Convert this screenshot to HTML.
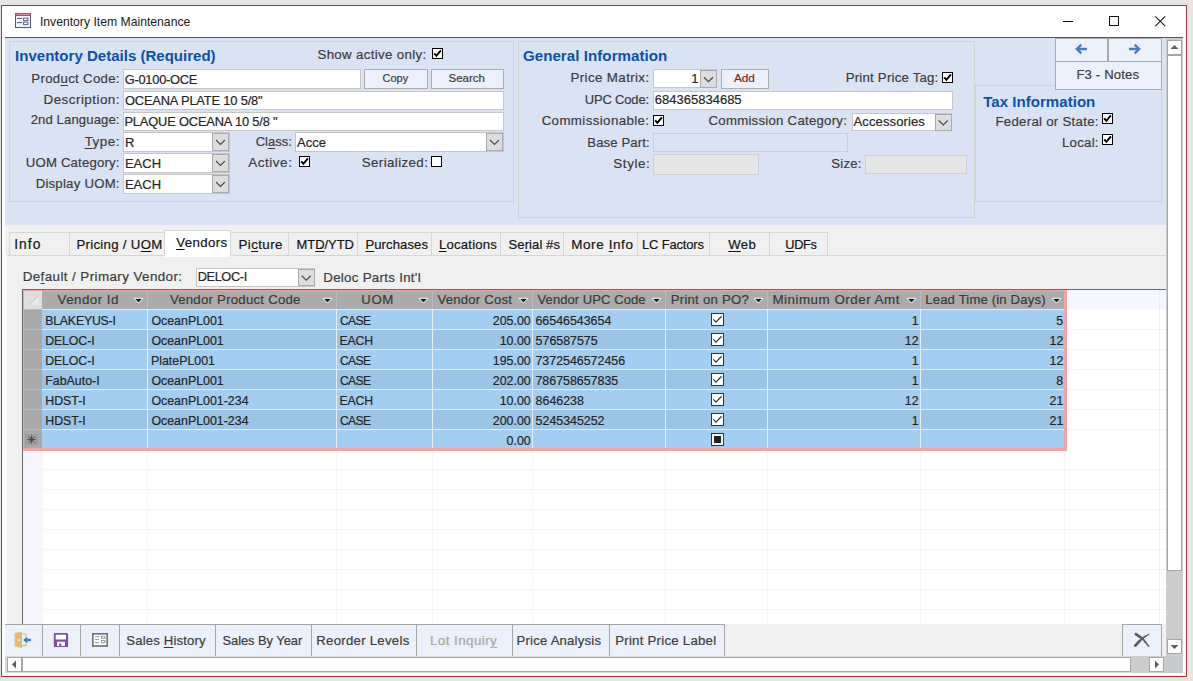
<!DOCTYPE html>
<html><head><meta charset="utf-8"><style>
html,body{margin:0;padding:0;}
body{width:1193px;height:681px;position:relative;overflow:hidden;background:#E6E6E6;font-family:"Liberation Sans", sans-serif;}
.a{position:absolute;}
.t{white-space:nowrap;line-height:20px;-webkit-text-stroke:0.2px currentColor;}
u{text-decoration:underline;text-underline-offset:2px;}
</style></head><body>
<div class="a" style="left:1px;top:5px;width:1186px;height:672px;background:#FFFFFF;box-shadow:inset 0 0 0 1px #A8343A;"></div>
<svg class="a" style="left:15px;top:13px" width="16" height="15" viewBox="0 0 16 15"><rect x="0.5" y="0.5" width="15" height="14" fill="#F2F5FB" stroke="#4D5B78"/><rect x="0" y="0" width="16" height="3" fill="#C9416A"/><rect x="1.5" y="1.2" width="13" height="0.8" fill="#E7A0B8"/><rect x="2" y="4.9" width="5" height="1.1" fill="#5A6E9A"/><rect x="2" y="9" width="5" height="1.1" fill="#5A6E9A"/><rect x="8.6" y="5.1" width="4.3" height="2.5" fill="none" stroke="#4D5B78" stroke-width="0.9"/><rect x="8.6" y="9.1" width="4.3" height="2.5" fill="none" stroke="#4D5B78" stroke-width="0.9"/></svg>
<div class="a t" style="left:39.90px;top:12px;font-size:12.2px;letter-spacing:-0.000px;color:#1A1A1A;font-weight:normal;-webkit-text-stroke:0;">Inventory Item Maintenance</div>
<div class="a" style="left:1063px;top:21px;width:10px;height:1px;background:#111;"></div>
<div class="a" style="left:1109px;top:16px;width:10px;height:10px;box-shadow:inset 0 0 0 1px #111;"></div>
<svg class="a" style="left:1154px;top:15px" width="13" height="13"><path d="M1.3 1.3 L11.2 11.2 M11.2 1.3 L1.3 11.2" stroke="#1A1A1A" stroke-width="1.05"/></svg>
<div class="a" style="left:5px;top:37px;width:1178px;height:1px;background:#A8343A;"></div>
<div class="a" style="left:5px;top:38px;width:1161px;height:187px;background:#DAE3F3;"></div>
<div class="a" style="left:9px;top:41px;width:505px;height:161px;box-shadow:inset 0 0 0 1px #D2D3D0;"></div>
<div class="a" style="left:518px;top:41px;width:457px;height:177px;box-shadow:inset 0 0 0 1px #D2D3D0;"></div>
<div class="a" style="left:975px;top:85px;width:187px;height:117px;box-shadow:inset 0 0 0 1px #D2D3D0;"></div>
<div class="a t" style="left:15.10px;top:46px;font-size:15.02px;letter-spacing:0.009px;color:#0F4FAA;font-weight:bold;-webkit-text-stroke:0;">Inventory Details (Required)</div>
<div class="a t" style="left:317.47px;top:45px;font-size:13.29px;letter-spacing:0.330px;color:#3C3C3C;font-weight:normal;">Show active only:</div>
<div class="a" style="left:432px;top:48px;width:11px;height:11px;background:#fff;box-shadow:inset 0 0 0 1px #000;"></div>
<svg class="a" style="left:432px;top:48px" width="11" height="11" viewBox="0 0 11 11"><path d="M2.2 5.3 L4.4 7.8 L8.9 2.4" stroke="#000" stroke-width="2" fill="none"/></svg>
<div class="a t" style="left:31.34px;top:69px;font-size:13.24px;letter-spacing:0.299px;color:#3C3C3C;font-weight:normal;">Prod<u>u</u>ct Code:</div>
<div class="a" style="left:123px;top:69px;width:238px;height:20px;background:#fff;box-shadow:inset 0 0 0 1px #C6C6C6;"></div>
<div class="a t" style="left:124.66px;top:70px;font-size:12.84px;letter-spacing:-0.234px;color:#262626;font-weight:normal;">G-0100-OCE</div>
<div class="a" style="left:364px;top:69px;width:64px;height:20px;background:#EBF0FA;box-shadow:inset 0 0 0 1px #ADADAD;"></div>
<div class="a" style="left:431px;top:69px;width:73px;height:20px;background:#EBF0FA;box-shadow:inset 0 0 0 1px #ADADAD;"></div>
<div class="a t" style="left:382.45px;top:68px;font-size:11.03px;letter-spacing:0.001px;color:#3C3C3C;font-weight:normal;">Copy</div>
<div class="a t" style="left:448.54px;top:68px;font-size:11.46px;letter-spacing:-0.002px;color:#3C3C3C;font-weight:normal;">Search</div>
<div class="a t" style="left:43.53px;top:90px;font-size:13.43px;letter-spacing:0.468px;color:#3C3C3C;font-weight:normal;">Description:</div>
<div class="a" style="left:123px;top:91px;width:381px;height:19px;background:#fff;box-shadow:inset 0 0 0 1px #C6C6C6;"></div>
<div class="a t" style="left:124.99px;top:91px;font-size:12.87px;letter-spacing:-0.169px;color:#262626;font-weight:normal;">OCEANA PLATE 10 5/8"</div>
<div class="a t" style="left:30.64px;top:110px;font-size:13.1px;letter-spacing:0.124px;color:#3C3C3C;font-weight:normal;">2nd Language:</div>
<div class="a" style="left:123px;top:112px;width:381px;height:19px;background:#fff;box-shadow:inset 0 0 0 1px #C6C6C6;"></div>
<div class="a t" style="left:124.47px;top:112px;font-size:12.87px;letter-spacing:-0.175px;color:#262626;font-weight:normal;">PLAQUE OCEANA 10 5/8 "</div>
<div class="a t" style="left:84.63px;top:132px;font-size:13.4px;letter-spacing:0.543px;color:#3C3C3C;font-weight:normal;"><u>T</u>ype:</div>
<div class="a" style="left:123px;top:132px;width:107px;height:20px;background:#fff;box-shadow:inset 0 0 0 1px #C6C6C6;"></div>
<div class="a" style="left:212px;top:133px;width:17px;height:18px;background:#DDDDDD;box-shadow:inset 0 0 0 1px #ABABAB;"></div>
<svg class="a" style="left:212px;top:133px" width="17" height="18"><path d="M4.0 7.0 L8.5 11.5 L13.0 7.0" stroke="#4A4A4A" stroke-width="1.15" fill="none"/></svg>
<div class="a t" style="left:124.96px;top:133px;font-size:13px;letter-spacing:0.000px;color:#262626;font-weight:normal;">R</div>
<div class="a t" style="left:25.78px;top:153px;font-size:13.15px;letter-spacing:0.203px;color:#3C3C3C;font-weight:normal;">UOM Category:</div>
<div class="a" style="left:123px;top:153px;width:107px;height:20px;background:#fff;box-shadow:inset 0 0 0 1px #C6C6C6;"></div>
<div class="a" style="left:212px;top:154px;width:17px;height:18px;background:#DDDDDD;box-shadow:inset 0 0 0 1px #ABABAB;"></div>
<svg class="a" style="left:212px;top:154px" width="17" height="18"><path d="M4.0 7.0 L8.5 11.5 L13.0 7.0" stroke="#4A4A4A" stroke-width="1.15" fill="none"/></svg>
<div class="a t" style="left:124.96px;top:154px;font-size:13px;letter-spacing:0.000px;color:#262626;font-weight:normal;">EACH</div>
<div class="a t" style="left:35.64px;top:174px;font-size:13.19px;letter-spacing:0.233px;color:#3C3C3C;font-weight:normal;">Display UOM:</div>
<div class="a" style="left:123px;top:174px;width:107px;height:20px;background:#fff;box-shadow:inset 0 0 0 1px #C6C6C6;"></div>
<div class="a" style="left:212px;top:175px;width:17px;height:18px;background:#DDDDDD;box-shadow:inset 0 0 0 1px #ABABAB;"></div>
<svg class="a" style="left:212px;top:175px" width="17" height="18"><path d="M4.0 7.0 L8.5 11.5 L13.0 7.0" stroke="#4A4A4A" stroke-width="1.15" fill="none"/></svg>
<div class="a t" style="left:124.96px;top:175px;font-size:13px;letter-spacing:0.000px;color:#262626;font-weight:normal;">EACH</div>
<div class="a t" style="left:255.65px;top:132px;font-size:13.01px;letter-spacing:0.009px;color:#3C3C3C;font-weight:normal;">Cl<u>a</u>ss:</div>
<div class="a" style="left:295px;top:132px;width:209px;height:20px;background:#fff;box-shadow:inset 0 0 0 1px #C6C6C6;"></div>
<div class="a" style="left:486px;top:133px;width:17px;height:18px;background:#DDDDDD;box-shadow:inset 0 0 0 1px #ABABAB;"></div>
<svg class="a" style="left:486px;top:133px" width="17" height="18"><path d="M4.0 7.0 L8.5 11.5 L13.0 7.0" stroke="#4A4A4A" stroke-width="1.15" fill="none"/></svg>
<div class="a t" style="left:297.10px;top:133px;font-size:13px;letter-spacing:0.000px;color:#262626;font-weight:normal;">Acce</div>
<div class="a t" style="left:248.30px;top:153px;font-size:13.47px;letter-spacing:0.527px;color:#3C3C3C;font-weight:normal;">Active:</div>
<div class="a" style="left:299px;top:156px;width:11px;height:11px;background:#fff;box-shadow:inset 0 0 0 1px #000;"></div>
<svg class="a" style="left:299px;top:156px" width="11" height="11" viewBox="0 0 11 11"><path d="M2.2 5.3 L4.4 7.8 L8.9 2.4" stroke="#000" stroke-width="2" fill="none"/></svg>
<div class="a t" style="left:361.77px;top:153px;font-size:13.35px;letter-spacing:0.378px;color:#3C3C3C;font-weight:normal;">Serialized:</div>
<div class="a" style="left:431px;top:156px;width:11px;height:11px;background:#fff;box-shadow:inset 0 0 0 1px #000;"></div>
<div class="a t" style="left:522.89px;top:46px;font-size:15.13px;letter-spacing:0.043px;color:#0F4FAA;font-weight:bold;-webkit-text-stroke:0;">General Information</div>
<div class="a t" style="left:570.53px;top:68px;font-size:13.35px;letter-spacing:0.372px;color:#3C3C3C;font-weight:normal;">Price Matrix:</div>
<div class="a" style="left:653px;top:69px;width:64px;height:19px;background:#fff;box-shadow:inset 0 0 0 1px #C6C6C6;"></div>
<div class="a" style="left:700px;top:69.5px;width:17px;height:18.5px;background:#DDDDDD;box-shadow:inset 0 0 0 1px #ABABAB;"></div>
<svg class="a" style="left:700px;top:69.5px" width="17" height="18.5"><path d="M4.0 7.25 L8.5 11.75 L13.0 7.25" stroke="#4A4A4A" stroke-width="1.15" fill="none"/></svg>
<div class="a t" style="left:691.37px;top:69px;font-size:13px;letter-spacing:0.000px;color:#262626;font-weight:normal;">1</div>
<div class="a" style="left:721px;top:69px;width:48px;height:20px;background:#EBF0FA;box-shadow:inset 0 0 0 1px #ADADAD;"></div>
<div class="a t" style="left:733.90px;top:68px;font-size:11.78px;letter-spacing:0.001px;color:#8E1A22;font-weight:normal;">Add</div>
<div class="a t" style="left:845.74px;top:68px;font-size:13.21px;letter-spacing:0.217px;color:#3C3C3C;font-weight:normal;">Print Price Tag:</div>
<div class="a" style="left:942px;top:72px;width:11px;height:11px;background:#fff;box-shadow:inset 0 0 0 1px #000;"></div>
<svg class="a" style="left:942px;top:72px" width="11" height="11" viewBox="0 0 11 11"><path d="M2.2 5.3 L4.4 7.8 L8.9 2.4" stroke="#000" stroke-width="2" fill="none"/></svg>
<div class="a t" style="left:584.70px;top:90px;font-size:12.92px;letter-spacing:-0.113px;color:#3C3C3C;font-weight:normal;">UPC Code:</div>
<div class="a" style="left:653px;top:91px;width:300px;height:19px;background:#fff;box-shadow:inset 0 0 0 1px #C6C6C6;"></div>
<div class="a t" style="left:654.85px;top:90px;font-size:13px;letter-spacing:0.000px;color:#262626;font-weight:normal;">684365834685</div>
<div class="a t" style="left:541.63px;top:111px;font-size:13.31px;letter-spacing:0.390px;color:#3C3C3C;font-weight:normal;">Commissionable:</div>
<div class="a" style="left:653px;top:115px;width:11px;height:11px;background:#fff;box-shadow:inset 0 0 0 1px #000;"></div>
<svg class="a" style="left:653px;top:115px" width="11" height="11" viewBox="0 0 11 11"><path d="M2.2 5.3 L4.4 7.8 L8.9 2.4" stroke="#000" stroke-width="2" fill="none"/></svg>
<div class="a t" style="left:708.54px;top:111px;font-size:13.21px;letter-spacing:0.253px;color:#3C3C3C;font-weight:normal;">Commission Category:</div>
<div class="a" style="left:851.5px;top:113px;width:100.5px;height:18px;background:#fff;box-shadow:inset 0 0 0 1px #C6C6C6;"></div>
<div class="a" style="left:935px;top:113.5px;width:16.5px;height:17.0px;background:#DDDDDD;box-shadow:inset 0 0 0 1px #ABABAB;"></div>
<svg class="a" style="left:935px;top:113.5px" width="16.5" height="17.0"><path d="M3.75 6.5 L8.25 11.0 L12.75 6.5" stroke="#4A4A4A" stroke-width="1.15" fill="none"/></svg>
<div class="a t" style="left:853.50px;top:112px;font-size:13.07px;letter-spacing:0.094px;color:#262626;font-weight:normal;">Accessories</div>
<div class="a t" style="left:587.35px;top:133px;font-size:13.11px;letter-spacing:0.121px;color:#3C3C3C;font-weight:normal;">Base Part:</div>
<div class="a" style="left:653px;top:133px;width:195px;height:19px;box-shadow:inset 0 0 0 1px #CDCDCD;"></div>
<div class="a t" style="left:613.36px;top:154px;font-size:13.47px;letter-spacing:0.527px;color:#3C3C3C;font-weight:normal;">Style:</div>
<div class="a" style="left:653px;top:154px;width:106px;height:21px;background:#E6E6E6;box-shadow:inset 0 0 0 1px #D0D0D0;"></div>
<div class="a t" style="left:831.37px;top:154px;font-size:13.18px;letter-spacing:0.221px;color:#3C3C3C;font-weight:normal;">Size:</div>
<div class="a" style="left:865px;top:155px;width:102px;height:19px;background:#E6E6E6;box-shadow:inset 0 0 0 1px #D0D0D0;"></div>
<div class="a t" style="left:983.25px;top:92px;font-size:15.05px;letter-spacing:0.021px;color:#0F4FAA;font-weight:bold;-webkit-text-stroke:0;">Tax Information</div>
<div class="a t" style="left:995.44px;top:112px;font-size:13.26px;letter-spacing:0.273px;color:#3C3C3C;font-weight:normal;">Federal or State:</div>
<div class="a" style="left:1102px;top:113px;width:11px;height:11px;background:#fff;box-shadow:inset 0 0 0 1px #000;"></div>
<svg class="a" style="left:1102px;top:113px" width="11" height="11" viewBox="0 0 11 11"><path d="M2.2 5.3 L4.4 7.8 L8.9 2.4" stroke="#000" stroke-width="2" fill="none"/></svg>
<div class="a t" style="left:1061.94px;top:133px;font-size:13.23px;letter-spacing:0.263px;color:#3C3C3C;font-weight:normal;">Local:</div>
<div class="a" style="left:1102px;top:134px;width:11px;height:11px;background:#fff;box-shadow:inset 0 0 0 1px #000;"></div>
<svg class="a" style="left:1102px;top:134px" width="11" height="11" viewBox="0 0 11 11"><path d="M2.2 5.3 L4.4 7.8 L8.9 2.4" stroke="#000" stroke-width="2" fill="none"/></svg>
<div class="a" style="left:1055px;top:38px;width:107px;height:52px;background:#EBF0FA;box-shadow:inset 0 0 0 1px #ABABAB;"></div>
<div class="a" style="left:1055px;top:61px;width:107px;height:1px;background:#ABABAB;"></div>
<div class="a" style="left:1107px;top:38px;width:2px;height:23px;background:#ABABAB;"></div>
<svg class="a" style="left:1074px;top:42px" width="14" height="14"><path d="M13 7 H3 M7.3 2.6 L2.8 7 L7.3 11.4" stroke="#4A7EBB" stroke-width="2.3" fill="none"/></svg>
<svg class="a" style="left:1128px;top:42px" width="14" height="14"><path d="M1 7 H11 M6.7 2.6 L11.2 7 L6.7 11.4" stroke="#4A7EBB" stroke-width="2.3" fill="none"/></svg>
<div class="a t" style="left:1076.45px;top:65px;font-size:13.13px;letter-spacing:0.150px;color:#3C3C3C;font-weight:normal;">F3 - Notes</div>
<div class="a" style="left:5px;top:225px;width:1161px;height:399px;background:#F0F0F0;"></div>
<div class="a" style="left:7px;top:255px;width:1159px;height:1px;background:#D6D6D6;"></div>
<div class="a" style="left:5px;top:255px;width:2px;height:369px;background:#FFFFFF;"></div>
<div class="a" style="left:9px;top:232px;width:61px;height:24px;background:#F0F0F0;box-shadow:inset 0 0 0 1px #D6D6D6;"></div>
<div class="a t" style="left:14.16px;top:235px;font-size:13.8px;letter-spacing:1.074px;color:#141414;font-weight:normal;">Info</div>
<div class="a" style="left:69px;top:232px;width:96px;height:24px;background:#F0F0F0;box-shadow:inset 0 0 0 1px #D6D6D6;"></div>
<div class="a t" style="left:76.44px;top:235px;font-size:13.24px;letter-spacing:0.286px;color:#141414;font-weight:normal;">Pricing / U<u>O</u>M</div>
<div class="a" style="left:164px;top:230px;width:67px;height:26px;background:#FFFFFF;box-shadow:inset 0 0 0 1px #D6D6D6;"></div>
<div class="a" style="left:165px;top:255px;width:65px;height:2px;background:#FFFFFF;"></div>
<div class="a t" style="left:176.20px;top:233px;font-size:13.28px;letter-spacing:0.395px;color:#141414;font-weight:normal;"><u>V</u>endors</div>
<div class="a" style="left:230px;top:232px;width:59px;height:24px;background:#F0F0F0;box-shadow:inset 0 0 0 1px #D6D6D6;"></div>
<div class="a t" style="left:238.53px;top:235px;font-size:13.35px;letter-spacing:0.400px;color:#141414;font-weight:normal;">Pi<u>c</u>ture</div>
<div class="a" style="left:288px;top:232px;width:70px;height:24px;background:#F0F0F0;box-shadow:inset 0 0 0 1px #D6D6D6;"></div>
<div class="a t" style="left:296.46px;top:235px;font-size:12.98px;letter-spacing:-0.033px;color:#141414;font-weight:normal;">MT<u>D</u>/YTD</div>
<div class="a" style="left:357px;top:232px;width:75px;height:24px;background:#F0F0F0;box-shadow:inset 0 0 0 1px #D6D6D6;"></div>
<div class="a t" style="left:365.45px;top:235px;font-size:13.07px;letter-spacing:0.098px;color:#141414;font-weight:normal;"><u>P</u>urchases</div>
<div class="a" style="left:431px;top:232px;width:70px;height:24px;background:#F0F0F0;box-shadow:inset 0 0 0 1px #D6D6D6;"></div>
<div class="a t" style="left:438.95px;top:235px;font-size:13.16px;letter-spacing:0.202px;color:#141414;font-weight:normal;"><u>L</u>ocations</div>
<div class="a" style="left:500px;top:232px;width:64px;height:24px;background:#F0F0F0;box-shadow:inset 0 0 0 1px #D6D6D6;"></div>
<div class="a t" style="left:508.48px;top:235px;font-size:13.07px;letter-spacing:0.083px;color:#141414;font-weight:normal;">Se<u>r</u>ial #s</div>
<div class="a" style="left:563px;top:232px;width:75px;height:24px;background:#F0F0F0;box-shadow:inset 0 0 0 1px #D6D6D6;"></div>
<div class="a t" style="left:571.22px;top:235px;font-size:13.49px;letter-spacing:0.585px;color:#141414;font-weight:normal;">More <u>I</u>nfo</div>
<div class="a" style="left:637px;top:232px;width:73px;height:24px;background:#F0F0F0;box-shadow:inset 0 0 0 1px #D6D6D6;"></div>
<div class="a t" style="left:642.07px;top:235px;font-size:12.9px;letter-spacing:-0.129px;color:#141414;font-weight:normal;">LC Factors</div>
<div class="a" style="left:709px;top:232px;width:61px;height:24px;background:#F0F0F0;box-shadow:inset 0 0 0 1px #D6D6D6;"></div>
<div class="a t" style="left:728.30px;top:235px;font-size:13.15px;letter-spacing:0.337px;color:#141414;font-weight:normal;"><u>W</u>eb</div>
<div class="a" style="left:769px;top:232px;width:59px;height:24px;background:#F0F0F0;box-shadow:inset 0 0 0 1px #D6D6D6;"></div>
<div class="a t" style="left:785.30px;top:235px;font-size:12.81px;letter-spacing:-0.350px;color:#141414;font-weight:normal;"><u>U</u>DFs</div>
<div class="a t" style="left:22.63px;top:267px;font-size:13.39px;letter-spacing:0.415px;color:#3C3C3C;font-weight:normal;">De<u>f</u>ault / Primary Vendor:</div>
<div class="a" style="left:196px;top:268px;width:119px;height:19px;background:#fff;box-shadow:inset 0 0 0 1px #C6C6C6;"></div>
<div class="a" style="left:298px;top:268.5px;width:16.5px;height:17.5px;background:#DDDDDD;box-shadow:inset 0 0 0 1px #ABABAB;"></div>
<svg class="a" style="left:298px;top:268.5px" width="16.5" height="17.5"><path d="M3.75 6.75 L8.25 11.25 L12.75 6.75" stroke="#4A4A4A" stroke-width="1.15" fill="none"/></svg>
<div class="a t" style="left:197.68px;top:267px;font-size:12.76px;letter-spacing:-0.369px;color:#262626;font-weight:normal;">DELOC-I</div>
<div class="a t" style="left:323.24px;top:268px;font-size:13.3px;letter-spacing:0.292px;color:#3C3C3C;font-weight:normal;">Deloc Parts Int'l</div>
<div class="a" style="left:22px;top:289px;width:1144px;height:335px;background:#FFFFFF;"></div>
<div class="a" style="left:22px;top:289px;width:1144px;height:1px;background:#696969;"></div>
<div class="a" style="left:22px;top:289px;width:1px;height:335px;background:#696969;"></div>
<div class="a" style="left:23px;top:450px;width:19px;height:174px;background:#F5F6FE;"></div>
<div class="a" style="left:1066px;top:290px;width:100px;height:19px;background:#F5F7FF;"></div>
<div class="a" style="left:23px;top:469px;width:1143px;height:1px;background:#F4F4F4;"></div>
<div class="a" style="left:23px;top:489px;width:1143px;height:1px;background:#F4F4F4;"></div>
<div class="a" style="left:23px;top:509px;width:1143px;height:1px;background:#F4F4F4;"></div>
<div class="a" style="left:23px;top:529px;width:1143px;height:1px;background:#F4F4F4;"></div>
<div class="a" style="left:23px;top:549px;width:1143px;height:1px;background:#F4F4F4;"></div>
<div class="a" style="left:23px;top:569px;width:1143px;height:1px;background:#F4F4F4;"></div>
<div class="a" style="left:23px;top:589px;width:1143px;height:1px;background:#F4F4F4;"></div>
<div class="a" style="left:23px;top:609px;width:1143px;height:1px;background:#F4F4F4;"></div>
<div class="a" style="left:42px;top:450px;width:1px;height:174px;background:#F5F5F5;"></div>
<div class="a" style="left:147px;top:450px;width:1px;height:174px;background:#F5F5F5;"></div>
<div class="a" style="left:336px;top:450px;width:1px;height:174px;background:#F5F5F5;"></div>
<div class="a" style="left:432px;top:450px;width:1px;height:174px;background:#F5F5F5;"></div>
<div class="a" style="left:532px;top:450px;width:1px;height:174px;background:#F5F5F5;"></div>
<div class="a" style="left:665px;top:450px;width:1px;height:174px;background:#F5F5F5;"></div>
<div class="a" style="left:767px;top:450px;width:1px;height:174px;background:#F5F5F5;"></div>
<div class="a" style="left:920px;top:450px;width:1px;height:174px;background:#F5F5F5;"></div>
<div class="a" style="left:1064px;top:450px;width:1px;height:174px;background:#F5F5F5;"></div>
<div class="a" style="left:1159px;top:290px;width:1px;height:334px;background:#EEEEEE;"></div>
<div class="a" style="left:1066px;top:329px;width:100px;height:1px;background:#F2F2F2;"></div>
<div class="a" style="left:1066px;top:349px;width:100px;height:1px;background:#F2F2F2;"></div>
<div class="a" style="left:1066px;top:369px;width:100px;height:1px;background:#F2F2F2;"></div>
<div class="a" style="left:1066px;top:389px;width:100px;height:1px;background:#F2F2F2;"></div>
<div class="a" style="left:1066px;top:409px;width:100px;height:1px;background:#F2F2F2;"></div>
<div class="a" style="left:1066px;top:429px;width:100px;height:1px;background:#F2F2F2;"></div>
<div class="a" style="left:23px;top:290px;width:1044px;height:161px;background:#F4A3A6;"></div>
<div class="a" style="left:24px;top:291px;width:1040px;height:18px;background:#ABABAB;"></div>
<div class="a" style="left:24px;top:291px;width:18px;height:18px;background:#DEDEDE;"></div>
<svg class="a" style="left:24px;top:291px" width="18" height="18"><path d="M5 14 L15 4 L15 14 Z" fill="#E8E8EC"/><path d="M5 14 L15 4" stroke="#B8C8E8" stroke-width="1"/></svg>
<div class="a t" style="left:57.60px;top:290px;font-size:13.36px;letter-spacing:0.444px;color:#3A3A3A;font-weight:normal;">Vendor Id</div>
<svg class="a" style="left:133px;top:297px" width="11" height="8"><path d="M1 1.3 L10 1.3 L5.5 6.1 Z" fill="#1A1F26" stroke="#fff" stroke-width="1"/></svg>
<div class="a t" style="left:169.90px;top:290px;font-size:13.2px;letter-spacing:0.248px;color:#3A3A3A;font-weight:normal;">Vendor Product Code</div>
<svg class="a" style="left:322px;top:297px" width="11" height="8"><path d="M1 1.3 L10 1.3 L5.5 6.1 Z" fill="#1A1F26" stroke="#fff" stroke-width="1"/></svg>
<div class="a" style="left:147px;top:291px;width:1px;height:18px;background:#B8BCC2;"></div>
<div class="a t" style="left:361.27px;top:290px;font-size:13.24px;letter-spacing:0.602px;color:#3A3A3A;font-weight:normal;">UOM</div>
<svg class="a" style="left:418px;top:297px" width="11" height="8"><path d="M1 1.3 L10 1.3 L5.5 6.1 Z" fill="#1A1F26" stroke="#fff" stroke-width="1"/></svg>
<div class="a" style="left:336px;top:291px;width:1px;height:18px;background:#B8BCC2;"></div>
<div class="a t" style="left:437.60px;top:290px;font-size:13.15px;letter-spacing:0.200px;color:#3A3A3A;font-weight:normal;">Vendor Cost</div>
<svg class="a" style="left:518px;top:297px" width="11" height="8"><path d="M1 1.3 L10 1.3 L5.5 6.1 Z" fill="#1A1F26" stroke="#fff" stroke-width="1"/></svg>
<div class="a" style="left:432px;top:291px;width:1px;height:18px;background:#B8BCC2;"></div>
<div class="a t" style="left:537.60px;top:290px;font-size:13.04px;letter-spacing:0.049px;color:#3A3A3A;font-weight:normal;">Vendor UPC Code</div>
<svg class="a" style="left:651px;top:297px" width="11" height="8"><path d="M1 1.3 L10 1.3 L5.5 6.1 Z" fill="#1A1F26" stroke="#fff" stroke-width="1"/></svg>
<div class="a" style="left:532px;top:291px;width:1px;height:18px;background:#B8BCC2;"></div>
<div class="a t" style="left:670.74px;top:290px;font-size:13.19px;letter-spacing:0.229px;color:#3A3A3A;font-weight:normal;">Print on PO?</div>
<svg class="a" style="left:753px;top:297px" width="11" height="8"><path d="M1 1.3 L10 1.3 L5.5 6.1 Z" fill="#1A1F26" stroke="#fff" stroke-width="1"/></svg>
<div class="a" style="left:665px;top:291px;width:1px;height:18px;background:#B8BCC2;"></div>
<div class="a t" style="left:772.43px;top:290px;font-size:13.39px;letter-spacing:0.504px;color:#3A3A3A;font-weight:normal;">Minimum Order Amt</div>
<svg class="a" style="left:906px;top:297px" width="11" height="8"><path d="M1 1.3 L10 1.3 L5.5 6.1 Z" fill="#1A1F26" stroke="#fff" stroke-width="1"/></svg>
<div class="a" style="left:767px;top:291px;width:1px;height:18px;background:#B8BCC2;"></div>
<div class="a t" style="left:925.25px;top:290px;font-size:13.13px;letter-spacing:0.157px;color:#3A3A3A;font-weight:normal;">Lead Time (in Days)</div>
<svg class="a" style="left:1051px;top:297px" width="11" height="8"><path d="M1 1.3 L10 1.3 L5.5 6.1 Z" fill="#1A1F26" stroke="#fff" stroke-width="1"/></svg>
<div class="a" style="left:920px;top:291px;width:1px;height:18px;background:#B8BCC2;"></div>
<div class="a" style="left:42px;top:309px;width:1022px;height:1px;background:#E4ECF4;"></div>
<div class="a" style="left:24px;top:309px;width:18px;height:1px;background:#B6BABF;"></div>
<div class="a" style="left:24px;top:310px;width:18px;height:19px;background:#A9A9A9;"></div>
<div class="a" style="left:42px;top:310px;width:1022px;height:19px;background:#A3CEF1;"></div>
<div class="a" style="left:147px;top:310px;width:1px;height:19px;background:#E4ECF4;"></div>
<div class="a" style="left:336px;top:310px;width:1px;height:19px;background:#E4ECF4;"></div>
<div class="a" style="left:432px;top:310px;width:1px;height:19px;background:#E4ECF4;"></div>
<div class="a" style="left:532px;top:310px;width:1px;height:19px;background:#E4ECF4;"></div>
<div class="a" style="left:665px;top:310px;width:1px;height:19px;background:#E4ECF4;"></div>
<div class="a" style="left:767px;top:310px;width:1px;height:19px;background:#E4ECF4;"></div>
<div class="a" style="left:920px;top:310px;width:1px;height:19px;background:#E4ECF4;"></div>
<div class="a t" style="left:45.22px;top:311px;font-size:12.28px;letter-spacing:-0.176px;color:#262626;font-weight:normal;">BLAKEYUS-I</div>
<div class="a t" style="left:151.40px;top:311px;font-size:12.4px;letter-spacing:0.000px;color:#262626;font-weight:normal;">OceanPL001</div>
<div class="a t" style="left:340.00px;top:311px;font-size:12.08px;letter-spacing:-0.648px;color:#262626;font-weight:normal;">CASE</div>
<div class="a t" style="left:492.82px;top:311px;font-size:12.4px;letter-spacing:0.000px;color:#262626;font-weight:normal;">205.00</div>
<div class="a t" style="left:535.48px;top:311px;font-size:12.4px;letter-spacing:0.000px;color:#262626;font-weight:normal;">66546543654</div>
<div class="a t" style="left:911.68px;top:311px;font-size:12.4px;letter-spacing:0.000px;color:#262626;font-weight:normal;">1</div>
<div class="a t" style="left:1056.35px;top:311px;font-size:12.4px;letter-spacing:0.000px;color:#262626;font-weight:normal;">5</div>
<div class="a" style="left:711px;top:313px;width:13px;height:13px;background:#FFFFFF;box-shadow:inset 0 0 0 1px #333333;"></div>
<svg class="a" style="left:711px;top:313px" width="13" height="13"><path d="M2.3 6.4 L5 9.1 L10.6 3.3" stroke="#333" stroke-width="1.25" fill="none"/></svg>
<div class="a" style="left:42px;top:329px;width:1022px;height:1px;background:#E4ECF4;"></div>
<div class="a" style="left:24px;top:329px;width:18px;height:1px;background:#B6BABF;"></div>
<div class="a" style="left:24px;top:330px;width:18px;height:19px;background:#A9A9A9;"></div>
<div class="a" style="left:42px;top:330px;width:1022px;height:19px;background:#9CC4E7;"></div>
<div class="a" style="left:147px;top:330px;width:1px;height:19px;background:#E4ECF4;"></div>
<div class="a" style="left:336px;top:330px;width:1px;height:19px;background:#E4ECF4;"></div>
<div class="a" style="left:432px;top:330px;width:1px;height:19px;background:#E4ECF4;"></div>
<div class="a" style="left:532px;top:330px;width:1px;height:19px;background:#E4ECF4;"></div>
<div class="a" style="left:665px;top:330px;width:1px;height:19px;background:#E4ECF4;"></div>
<div class="a" style="left:767px;top:330px;width:1px;height:19px;background:#E4ECF4;"></div>
<div class="a" style="left:920px;top:330px;width:1px;height:19px;background:#E4ECF4;"></div>
<div class="a t" style="left:45.21px;top:331px;font-size:12.33px;letter-spacing:-0.107px;color:#262626;font-weight:normal;">DELOC-I</div>
<div class="a t" style="left:151.40px;top:331px;font-size:12.4px;letter-spacing:0.000px;color:#262626;font-weight:normal;">OceanPL001</div>
<div class="a t" style="left:339.62px;top:331px;font-size:12.29px;letter-spacing:-0.225px;color:#262626;font-weight:normal;">EACH</div>
<div class="a t" style="left:499.72px;top:331px;font-size:12.4px;letter-spacing:0.000px;color:#262626;font-weight:normal;">10.00</div>
<div class="a t" style="left:535.60px;top:331px;font-size:12.4px;letter-spacing:0.000px;color:#262626;font-weight:normal;">576587575</div>
<div class="a t" style="left:904.78px;top:331px;font-size:12.4px;letter-spacing:0.000px;color:#262626;font-weight:normal;">12</div>
<div class="a t" style="left:1049.58px;top:331px;font-size:12.4px;letter-spacing:0.000px;color:#262626;font-weight:normal;">12</div>
<div class="a" style="left:711px;top:333px;width:13px;height:13px;background:#FFFFFF;box-shadow:inset 0 0 0 1px #333333;"></div>
<svg class="a" style="left:711px;top:333px" width="13" height="13"><path d="M2.3 6.4 L5 9.1 L10.6 3.3" stroke="#333" stroke-width="1.25" fill="none"/></svg>
<div class="a" style="left:42px;top:349px;width:1022px;height:1px;background:#E4ECF4;"></div>
<div class="a" style="left:24px;top:349px;width:18px;height:1px;background:#B6BABF;"></div>
<div class="a" style="left:24px;top:350px;width:18px;height:19px;background:#A9A9A9;"></div>
<div class="a" style="left:42px;top:350px;width:1022px;height:19px;background:#A3CEF1;"></div>
<div class="a" style="left:147px;top:350px;width:1px;height:19px;background:#E4ECF4;"></div>
<div class="a" style="left:336px;top:350px;width:1px;height:19px;background:#E4ECF4;"></div>
<div class="a" style="left:432px;top:350px;width:1px;height:19px;background:#E4ECF4;"></div>
<div class="a" style="left:532px;top:350px;width:1px;height:19px;background:#E4ECF4;"></div>
<div class="a" style="left:665px;top:350px;width:1px;height:19px;background:#E4ECF4;"></div>
<div class="a" style="left:767px;top:350px;width:1px;height:19px;background:#E4ECF4;"></div>
<div class="a" style="left:920px;top:350px;width:1px;height:19px;background:#E4ECF4;"></div>
<div class="a t" style="left:45.21px;top:351px;font-size:12.33px;letter-spacing:-0.107px;color:#262626;font-weight:normal;">DELOC-I</div>
<div class="a t" style="left:150.91px;top:351px;font-size:12.4px;letter-spacing:0.000px;color:#262626;font-weight:normal;">PlatePL001</div>
<div class="a t" style="left:340.00px;top:351px;font-size:12.08px;letter-spacing:-0.648px;color:#262626;font-weight:normal;">CASE</div>
<div class="a t" style="left:492.82px;top:351px;font-size:12.4px;letter-spacing:0.000px;color:#262626;font-weight:normal;">195.00</div>
<div class="a t" style="left:535.48px;top:351px;font-size:12.4px;letter-spacing:0.000px;color:#262626;font-weight:normal;">7372546572456</div>
<div class="a t" style="left:911.68px;top:351px;font-size:12.4px;letter-spacing:0.000px;color:#262626;font-weight:normal;">1</div>
<div class="a t" style="left:1049.58px;top:351px;font-size:12.4px;letter-spacing:0.000px;color:#262626;font-weight:normal;">12</div>
<div class="a" style="left:711px;top:353px;width:13px;height:13px;background:#FFFFFF;box-shadow:inset 0 0 0 1px #333333;"></div>
<svg class="a" style="left:711px;top:353px" width="13" height="13"><path d="M2.3 6.4 L5 9.1 L10.6 3.3" stroke="#333" stroke-width="1.25" fill="none"/></svg>
<div class="a" style="left:42px;top:369px;width:1022px;height:1px;background:#E4ECF4;"></div>
<div class="a" style="left:24px;top:369px;width:18px;height:1px;background:#B6BABF;"></div>
<div class="a" style="left:24px;top:370px;width:18px;height:19px;background:#A9A9A9;"></div>
<div class="a" style="left:42px;top:370px;width:1022px;height:19px;background:#9CC4E7;"></div>
<div class="a" style="left:147px;top:370px;width:1px;height:19px;background:#E4ECF4;"></div>
<div class="a" style="left:336px;top:370px;width:1px;height:19px;background:#E4ECF4;"></div>
<div class="a" style="left:432px;top:370px;width:1px;height:19px;background:#E4ECF4;"></div>
<div class="a" style="left:532px;top:370px;width:1px;height:19px;background:#E4ECF4;"></div>
<div class="a" style="left:665px;top:370px;width:1px;height:19px;background:#E4ECF4;"></div>
<div class="a" style="left:767px;top:370px;width:1px;height:19px;background:#E4ECF4;"></div>
<div class="a" style="left:920px;top:370px;width:1px;height:19px;background:#E4ECF4;"></div>
<div class="a t" style="left:45.21px;top:371px;font-size:12.4px;letter-spacing:0.000px;color:#262626;font-weight:normal;">FabAuto-I</div>
<div class="a t" style="left:151.40px;top:371px;font-size:12.4px;letter-spacing:0.000px;color:#262626;font-weight:normal;">OceanPL001</div>
<div class="a t" style="left:340.00px;top:371px;font-size:12.08px;letter-spacing:-0.648px;color:#262626;font-weight:normal;">CASE</div>
<div class="a t" style="left:492.82px;top:371px;font-size:12.4px;letter-spacing:0.000px;color:#262626;font-weight:normal;">202.00</div>
<div class="a t" style="left:535.48px;top:371px;font-size:12.4px;letter-spacing:0.000px;color:#262626;font-weight:normal;">786758657835</div>
<div class="a t" style="left:911.68px;top:371px;font-size:12.4px;letter-spacing:0.000px;color:#262626;font-weight:normal;">1</div>
<div class="a t" style="left:1056.35px;top:371px;font-size:12.4px;letter-spacing:0.000px;color:#262626;font-weight:normal;">8</div>
<div class="a" style="left:711px;top:373px;width:13px;height:13px;background:#FFFFFF;box-shadow:inset 0 0 0 1px #333333;"></div>
<svg class="a" style="left:711px;top:373px" width="13" height="13"><path d="M2.3 6.4 L5 9.1 L10.6 3.3" stroke="#333" stroke-width="1.25" fill="none"/></svg>
<div class="a" style="left:42px;top:389px;width:1022px;height:1px;background:#E4ECF4;"></div>
<div class="a" style="left:24px;top:389px;width:18px;height:1px;background:#B6BABF;"></div>
<div class="a" style="left:24px;top:390px;width:18px;height:19px;background:#A9A9A9;"></div>
<div class="a" style="left:42px;top:390px;width:1022px;height:19px;background:#A3CEF1;"></div>
<div class="a" style="left:147px;top:390px;width:1px;height:19px;background:#E4ECF4;"></div>
<div class="a" style="left:336px;top:390px;width:1px;height:19px;background:#E4ECF4;"></div>
<div class="a" style="left:432px;top:390px;width:1px;height:19px;background:#E4ECF4;"></div>
<div class="a" style="left:532px;top:390px;width:1px;height:19px;background:#E4ECF4;"></div>
<div class="a" style="left:665px;top:390px;width:1px;height:19px;background:#E4ECF4;"></div>
<div class="a" style="left:767px;top:390px;width:1px;height:19px;background:#E4ECF4;"></div>
<div class="a" style="left:920px;top:390px;width:1px;height:19px;background:#E4ECF4;"></div>
<div class="a t" style="left:45.21px;top:391px;font-size:12.4px;letter-spacing:0.000px;color:#262626;font-weight:normal;">HDST-I</div>
<div class="a t" style="left:151.40px;top:391px;font-size:12.4px;letter-spacing:0.000px;color:#262626;font-weight:normal;">OceanPL001-234</div>
<div class="a t" style="left:339.62px;top:391px;font-size:12.29px;letter-spacing:-0.225px;color:#262626;font-weight:normal;">EACH</div>
<div class="a t" style="left:499.72px;top:391px;font-size:12.4px;letter-spacing:0.000px;color:#262626;font-weight:normal;">10.00</div>
<div class="a t" style="left:535.60px;top:391px;font-size:12.4px;letter-spacing:0.000px;color:#262626;font-weight:normal;">8646238</div>
<div class="a t" style="left:904.78px;top:391px;font-size:12.4px;letter-spacing:0.000px;color:#262626;font-weight:normal;">12</div>
<div class="a t" style="left:1049.58px;top:391px;font-size:12.4px;letter-spacing:0.000px;color:#262626;font-weight:normal;">21</div>
<div class="a" style="left:711px;top:393px;width:13px;height:13px;background:#FFFFFF;box-shadow:inset 0 0 0 1px #333333;"></div>
<svg class="a" style="left:711px;top:393px" width="13" height="13"><path d="M2.3 6.4 L5 9.1 L10.6 3.3" stroke="#333" stroke-width="1.25" fill="none"/></svg>
<div class="a" style="left:42px;top:409px;width:1022px;height:1px;background:#E4ECF4;"></div>
<div class="a" style="left:24px;top:409px;width:18px;height:1px;background:#B6BABF;"></div>
<div class="a" style="left:24px;top:410px;width:18px;height:19px;background:#A9A9A9;"></div>
<div class="a" style="left:42px;top:410px;width:1022px;height:19px;background:#9CC4E7;"></div>
<div class="a" style="left:147px;top:410px;width:1px;height:19px;background:#E4ECF4;"></div>
<div class="a" style="left:336px;top:410px;width:1px;height:19px;background:#E4ECF4;"></div>
<div class="a" style="left:432px;top:410px;width:1px;height:19px;background:#E4ECF4;"></div>
<div class="a" style="left:532px;top:410px;width:1px;height:19px;background:#E4ECF4;"></div>
<div class="a" style="left:665px;top:410px;width:1px;height:19px;background:#E4ECF4;"></div>
<div class="a" style="left:767px;top:410px;width:1px;height:19px;background:#E4ECF4;"></div>
<div class="a" style="left:920px;top:410px;width:1px;height:19px;background:#E4ECF4;"></div>
<div class="a t" style="left:45.21px;top:411px;font-size:12.4px;letter-spacing:0.000px;color:#262626;font-weight:normal;">HDST-I</div>
<div class="a t" style="left:151.40px;top:411px;font-size:12.4px;letter-spacing:0.000px;color:#262626;font-weight:normal;">OceanPL001-234</div>
<div class="a t" style="left:340.00px;top:411px;font-size:12.08px;letter-spacing:-0.648px;color:#262626;font-weight:normal;">CASE</div>
<div class="a t" style="left:492.82px;top:411px;font-size:12.4px;letter-spacing:0.000px;color:#262626;font-weight:normal;">200.00</div>
<div class="a t" style="left:535.60px;top:411px;font-size:12.4px;letter-spacing:0.000px;color:#262626;font-weight:normal;">5245345252</div>
<div class="a t" style="left:911.68px;top:411px;font-size:12.4px;letter-spacing:0.000px;color:#262626;font-weight:normal;">1</div>
<div class="a t" style="left:1049.58px;top:411px;font-size:12.4px;letter-spacing:0.000px;color:#262626;font-weight:normal;">21</div>
<div class="a" style="left:711px;top:413px;width:13px;height:13px;background:#FFFFFF;box-shadow:inset 0 0 0 1px #333333;"></div>
<svg class="a" style="left:711px;top:413px" width="13" height="13"><path d="M2.3 6.4 L5 9.1 L10.6 3.3" stroke="#333" stroke-width="1.25" fill="none"/></svg>
<div class="a" style="left:42px;top:429px;width:1022px;height:1px;background:#E4ECF4;"></div>
<div class="a" style="left:24px;top:429px;width:18px;height:1px;background:#B6BABF;"></div>
<div class="a" style="left:24px;top:430px;width:18px;height:18px;background:#A9A9A9;"></div>
<div class="a" style="left:42px;top:430px;width:1022px;height:18px;background:#A3CEF1;"></div>
<div class="a" style="left:147px;top:430px;width:1px;height:18px;background:#E4ECF4;"></div>
<div class="a" style="left:336px;top:430px;width:1px;height:18px;background:#E4ECF4;"></div>
<div class="a" style="left:432px;top:430px;width:1px;height:18px;background:#E4ECF4;"></div>
<div class="a" style="left:532px;top:430px;width:1px;height:18px;background:#E4ECF4;"></div>
<div class="a" style="left:665px;top:430px;width:1px;height:18px;background:#E4ECF4;"></div>
<div class="a" style="left:767px;top:430px;width:1px;height:18px;background:#E4ECF4;"></div>
<div class="a" style="left:920px;top:430px;width:1px;height:18px;background:#E4ECF4;"></div>
<div class="a t" style="left:506.61px;top:431px;font-size:12.4px;letter-spacing:0.000px;color:#262626;font-weight:normal;">0.00</div>
<div class="a" style="left:711px;top:433px;width:13px;height:13px;background:#FFFFFF;box-shadow:inset 0 0 0 1px #333333;"></div>
<div class="a" style="left:714px;top:436px;width:7px;height:7px;background:#222222;"></div>
<div class="a" style="left:25px;top:434px;width:13px;height:11px;background:#9C9C9C;"></div>
<svg class="a" style="left:25px;top:433px" width="13" height="13"><path d="M6.5 2.5 V10.5 M2.5 6.5 H10.5 M3.7 3.7 L9.3 9.3 M9.3 3.7 L3.7 9.3" stroke="#4A4A4A" stroke-width="1"/></svg>
<div class="a" style="left:5px;top:624px;width:1161px;height:32px;background:#F0F0F0;"></div>
<div class="a" style="left:5px;top:624px;width:38px;height:33px;background:#EBF0FA;box-shadow:inset 0 0 0 1px #A6A6A6;"></div>
<div class="a" style="left:42px;top:624px;width:39px;height:33px;background:#EBF0FA;box-shadow:inset 0 0 0 1px #A6A6A6;"></div>
<div class="a" style="left:80px;top:624px;width:40px;height:33px;background:#EBF0FA;box-shadow:inset 0 0 0 1px #A6A6A6;"></div>
<div class="a" style="left:119px;top:624px;width:97px;height:33px;background:#EBF0FA;box-shadow:inset 0 0 0 1px #A6A6A6;"></div>
<div class="a" style="left:215px;top:624px;width:97px;height:33px;background:#EBF0FA;box-shadow:inset 0 0 0 1px #A6A6A6;"></div>
<div class="a" style="left:311px;top:624px;width:106px;height:33px;background:#EBF0FA;box-shadow:inset 0 0 0 1px #A6A6A6;"></div>
<div class="a" style="left:416px;top:624px;width:97px;height:33px;background:#EBF0FA;box-shadow:inset 0 0 0 1px #A6A6A6;"></div>
<div class="a" style="left:512px;top:624px;width:98px;height:33px;background:#EBF0FA;box-shadow:inset 0 0 0 1px #A6A6A6;"></div>
<div class="a" style="left:609px;top:624px;width:116px;height:33px;background:#EBF0FA;box-shadow:inset 0 0 0 1px #A6A6A6;"></div>
<div class="a" style="left:5px;top:625px;width:1px;height:31px;background:#EBF0FA;"></div>
<div class="a" style="left:1122px;top:624px;width:40px;height:33px;background:#EBF0FA;box-shadow:inset 0 0 0 1px #A6A6A6;"></div>
<div class="a t" style="left:126.37px;top:631px;font-size:13.14px;letter-spacing:0.152px;color:#3C3C3C;font-weight:normal;">Sales <u>H</u>istory</div>
<div class="a t" style="left:222.48px;top:631px;font-size:12.94px;letter-spacing:-0.068px;color:#3C3C3C;font-weight:normal;">Sales By Year</div>
<div class="a t" style="left:316.34px;top:631px;font-size:13.21px;letter-spacing:0.259px;color:#3C3C3C;font-weight:normal;">Reorder Levels</div>
<div class="a t" style="left:429.93px;top:631px;font-size:13.4px;letter-spacing:0.430px;color:#A6A6A6;font-weight:normal;">Lot Inquir<u>y</u></div>
<div class="a t" style="left:516.55px;top:631px;font-size:13.17px;letter-spacing:0.196px;color:#3C3C3C;font-weight:normal;">Price Analysis</div>
<div class="a t" style="left:615.24px;top:631px;font-size:13.23px;letter-spacing:0.245px;color:#3C3C3C;font-weight:normal;">Print Price Label</div>
<svg class="a" style="left:10px;top:628px" width="102" height="24" viewBox="0 0 102 24"><path d="M4.7 5 L12 3.8 L12 20 L4.7 18.2 Z" fill="#E8B96C"/><path d="M12 6 H15.8 V8.5 M15.8 15.5 V17.6 H12" stroke="#E8B96C" stroke-width="1.2" fill="none"/><rect x="8" y="11.3" width="1.6" height="1.6" fill="#fff"/><path d="M21 12 H15" stroke="#3F7DC0" stroke-width="2.4"/><path d="M13.2 12 L17.3 8.6 L17.3 15.4 Z" fill="#3F7DC0"/><path d="M43.8 5 H57 L58.1 6.1 V18 Q58.1 19 57.1 19 H44.8 Q43.8 19 43.8 18 Z" fill="#7E4DA8"/><rect x="45.7" y="6.7" width="10.3" height="4.8" fill="#fff"/><rect x="47" y="13.7" width="8" height="4.3" fill="#fff"/><rect x="49.2" y="15.6" width="2.1" height="2.4" fill="#7E4DA8"/><rect x="82.8" y="5.8" width="14.4" height="12.2" fill="#fff" stroke="#6F6F6F" stroke-width="1.6"/><path d="M85 8.6 H89 M85 11.6 H89 M85 14.6 H89" stroke="#9A9A9A" stroke-width="1"/><rect x="91.5" y="8.3" width="3.4" height="2" fill="none" stroke="#9A9A9A" stroke-width="1"/><rect x="91.5" y="12.5" width="3.4" height="2.2" fill="none" stroke="#9A9A9A" stroke-width="1"/></svg>
<svg class="a" style="left:1130px;top:628px" width="24" height="24"><g stroke="#5C5C5C" stroke-linecap="round" fill="none"><path d="M5.8 6.2 L9.0 8.2" stroke-width="2.7"/><path d="M9.0 8.2 L12.3 10.2" stroke-width="2.5"/><path d="M12.3 10.2 L15.5 14.25" stroke-width="2.0"/><path d="M15.5 14.25 L18.7 18.3" stroke-width="1.4"/><path d="M5.3 17.6 L8.8 13.9" stroke-width="2.8"/><path d="M8.8 13.9 L12.3 10.2" stroke-width="2.3"/><path d="M12.3 10.2 L15.6 8.25" stroke-width="1.7"/><path d="M15.6 8.25 L19 6.3" stroke-width="1.1"/></g></svg>
<div class="a" style="left:1166px;top:38px;width:17px;height:618px;background:#CDCDCD;"></div>
<div class="a" style="left:1167px;top:40px;width:15px;height:15px;background:#FFFFFF;box-shadow:inset 0 0 0 1px #A6A6A6;"></div>
<svg class="a" style="left:1167px;top:40px" width="15" height="15"><path d="M3.5 9 L7.5 5 L11.5 9 Z" fill="#606060"/></svg>
<div class="a" style="left:1167px;top:55px;width:15px;height:516px;background:#FFFFFF;box-shadow:inset 0 0 0 1px #A6A6A6;"></div>
<div class="a" style="left:1167px;top:639px;width:15px;height:15px;background:#FFFFFF;box-shadow:inset 0 0 0 1px #A6A6A6;"></div>
<svg class="a" style="left:1167px;top:639px" width="15" height="15"><path d="M3.5 6 L7.5 10 L11.5 6 Z" fill="#606060"/></svg>
<div class="a" style="left:5px;top:656px;width:1161px;height:17px;background:#DCDCDC;"></div>
<div class="a" style="left:1131px;top:656px;width:35px;height:17px;background:#CDCDCD;"></div>
<div class="a" style="left:7px;top:657px;width:15px;height:15px;background:#FFFFFF;box-shadow:inset 0 0 0 1px #A6A6A6;"></div>
<svg class="a" style="left:7px;top:657px" width="15" height="15"><path d="M9 3.5 L5 7.5 L9 11.5 Z" fill="#606060"/></svg>
<div class="a" style="left:22px;top:657px;width:1109px;height:15px;background:#FFFFFF;box-shadow:inset 0 0 0 1px #A6A6A6;"></div>
<div class="a" style="left:1149px;top:657px;width:15px;height:15px;background:#FFFFFF;box-shadow:inset 0 0 0 1px #A6A6A6;"></div>
<svg class="a" style="left:1149px;top:657px" width="15" height="15"><path d="M6 3.5 L10 7.5 L6 11.5 Z" fill="#606060"/></svg>
<div class="a" style="left:1166px;top:656px;width:17px;height:17px;background:#C8CACD;"></div>
</body></html>
